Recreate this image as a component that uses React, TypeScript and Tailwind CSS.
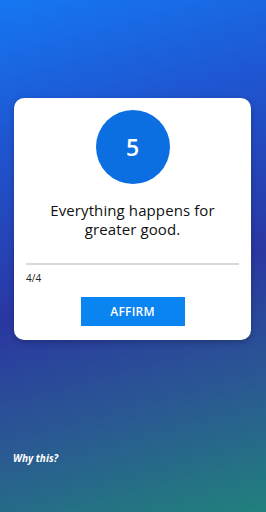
import React from "react";

export default function App() {
  return (
    <div
      className="w-[266px] h-[512px] overflow-hidden flex flex-col bg-[linear-gradient(165deg,#1677f2_0%,#1f55d0_25%,#2a37a2_55%,#2a5a92_78%,#21817c_100%)]"
      style={{ fontFamily: "'Open Sans', 'Liberation Sans', sans-serif" }}
    >
      <div className="mt-[98px] mx-[14px] w-[237px] h-[242px] bg-white rounded-[10px] flex flex-col items-center pt-[12px] shadow-[0_2px_6px_rgba(0,0,0,0.25)]">
        <div className="w-[74px] h-[74px] rounded-full bg-[#0b6fe2] flex items-center justify-center text-white text-[23px] font-semibold leading-none">
          5
        </div>
        <div className="mt-[17px] text-center text-[15px] leading-[19px] text-[#111] tracking-[0.1px]">
          Everything happens for
          <br />
          greater good.
        </div>
        <div className="mt-[24px] w-[213px] h-[2px] bg-[#d9d9d9]"></div>
        <div className="w-[213px] mt-[7px] text-[10px] leading-[12px] text-[#222]">4/4</div>
        <div className="mt-[13px] w-[104px] h-[29px] bg-[#0a84f0] flex items-center justify-center text-white text-[12px] font-semibold tracking-[0.2px]">
          AFFIRM
        </div>
      </div>
      <div className="mt-[111px] ml-[13px] text-white text-[10px] leading-[14px] italic font-bold">Why this?</div>
    </div>
  );
}
